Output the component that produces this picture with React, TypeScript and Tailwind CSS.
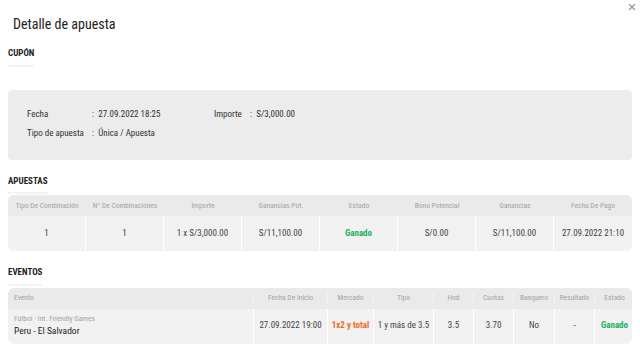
import { X } from "lucide-react";

const font = { fontFamily: "'Roboto Condensed', Roboto, 'Liberation Sans', sans-serif" };

const apuestasHead = [
  "Tipo De Combinación",
  "N° De Combinaciones",
  "Importe",
  "Ganancias Pot.",
  "Estado",
  "Bono Potencial",
  "Ganancias",
  "Fecha De Pago",
];

function SectionTitle({ children }: { children: string }) {
  return (
    <div className="px-2">
      <div className="inline-block border-b-2 border-[#f3f3f3] pb-1 text-[9px] font-bold text-[#222]">
        {children}
      </div>
    </div>
  );
}

export default function App() {
  return (
    <div className="relative h-[352px] w-[640px] overflow-hidden bg-white text-[#333]" style={font}>
      <button className="absolute right-[3px] top-[2px] text-[#999]">
        <X className="h-2.5 w-2.5" strokeWidth={3} />
      </button>

      <h1 className="px-[13px] pt-[14px] text-[14px] leading-[20px] text-[#222]">Detalle de apuesta</h1>

      <div className="mt-[5px]">
        <SectionTitle>CUPÓN</SectionTitle>
      </div>

      {/* Cupón */}
      <div className="mx-2 mt-[23px] h-[70px] rounded bg-[#ececec] px-[19px] py-[16px] text-[9px] text-[#333]">
        <div className="flex h-[19px] items-center">
          <span className="w-[65px]">Fecha</span>
          <span className="w-[121px]">:&nbsp; 27.09.2022 18:25</span>
          <span className="ml-[1px] w-[36px]">Importe</span>
          <span>:&nbsp; S/3,000.00</span>
        </div>
        <div className="flex h-[19px] items-center">
          <span className="w-[65px]">Tipo de apuesta</span>
          <span>:&nbsp; Única / Apuesta</span>
        </div>
      </div>

      <div className="mt-[7px]">
        <SectionTitle>APUESTAS</SectionTitle>
      </div>

      {/* Apuestas */}
      <div className="mx-2 mt-[1px] overflow-hidden rounded-md bg-[#f1f1f1]">
        <div className="grid h-[21px] grid-cols-8 items-center bg-[#eaeaea] text-[7.5px] text-[#a3a3a3]">
          {apuestasHead.map((h) => (
            <div key={h} className="text-center">
              {h}
            </div>
          ))}
        </div>
        <div className="grid h-[35px] grid-cols-8 divide-x divide-white text-[9px] text-[#444]">
          <div className="flex items-center justify-center">1</div>
          <div className="flex items-center justify-center">1</div>
          <div className="flex items-center justify-center">1 x S/3,000.00</div>
          <div className="flex items-center justify-center">S/11,100.00</div>
          <div className="flex items-center justify-center font-bold text-[#22b35c]">Ganado</div>
          <div className="flex items-center justify-center">S/0.00</div>
          <div className="flex items-center justify-center">S/11,100.00</div>
          <div className="flex items-center justify-center">27.09.2022 21:10</div>
        </div>
      </div>

      <div className="mt-[7px]">
        <SectionTitle>EVENTOS</SectionTitle>
      </div>

      {/* Eventos */}
      <div className="mx-2 mt-[2px] overflow-hidden rounded-md bg-[#f1f1f1]">
        <div className="grid h-[21px] grid-cols-[246px_74px_46px_60px_40px_40px_41px_40px_39px] items-center divide-x divide-[#f4f4f4] bg-[#eaeaea] text-[7.5px] text-[#a3a3a3]">
          <div className="pl-[6px]">Evento</div>
          <div className="text-center">Fecha De Inicio</div>
          <div className="text-center">Mercado</div>
          <div className="text-center">Tipo</div>
          <div className="text-center">Hnd</div>
          <div className="text-center">Cuotas</div>
          <div className="text-center">Banquero</div>
          <div className="text-center">Resultado</div>
          <div className="text-center">Estado</div>
        </div>
        <div className="grid h-[35px] grid-cols-[246px_74px_46px_60px_40px_40px_41px_40px_39px] divide-x divide-white text-[9px] text-[#444]">
          <div className="flex flex-col justify-center pl-[6px]">
            <span className="text-[7.5px] leading-[10px] text-[#a3a3a3]">Fútbol - Int. Friendly Games</span>
            <span className="text-[9.5px] leading-[14px] text-[#222]">Peru - El Salvador</span>
          </div>
          <div className="flex items-center justify-center">27.09.2022 19:00</div>
          <div className="flex items-center justify-center font-bold text-[#f26b1d]">1x2 y total</div>
          <div className="flex items-center justify-center">1 y más de 3.5</div>
          <div className="flex items-center justify-center">3.5</div>
          <div className="flex items-center justify-center">3.70</div>
          <div className="flex items-center justify-center">No</div>
          <div className="flex items-center justify-center font-bold text-[#22b35c]">-</div>
          <div className="flex items-center justify-center font-bold text-[#22b35c]">Ganado</div>
        </div>
      </div>
    </div>
  );
}
